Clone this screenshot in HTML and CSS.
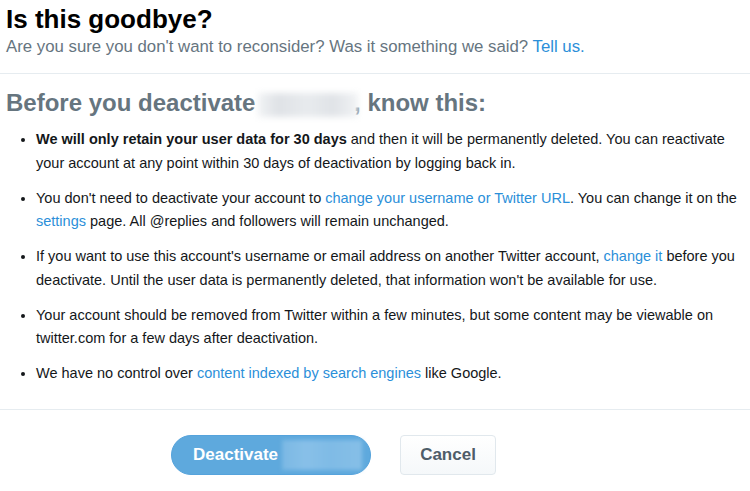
FILE: index.html
```html
<!DOCTYPE html>
<html>
<head>
<meta charset="utf-8">
<link rel="stylesheet" href="styles.css">
</head>
<body>
<div class="page">
  <header class="top">
    <h1 class="title">Is this goodbye?</h1>
    <p class="sub">Are you sure you don't want to reconsider? Was it something we said? <a class="link" href="#">Tell us.</a></p>
  </header>
  <section class="body">
    <h2 class="heading">Before you deactivate <span class="blur blur-head"></span>, know this:</h2>
    <ul class="list">
      <li><b>We will only retain your user data for 30 days</b> and then it will be permanently deleted. You can reactivate your account at any point within 30 days of deactivation by logging back in.</li>
      <li>You don't need to deactivate your account to <a class="link" href="#">change your username or Twitter URL</a>. You can change it on the <a class="link" href="#">settings</a> page. All @replies and followers will remain unchanged.</li>
      <li>If you want to use this account's username or email address on another Twitter account, <a class="link" href="#">change it</a> before you deactivate. Until the user data is permanently deleted, that information won't be available for use.</li>
      <li>Your account should be removed from Twitter within a few minutes, but some content may be viewable on twitter.com for a few days after deactivation.</li>
      <li>We have no control over <a class="link" href="#">content indexed by search engines</a> like Google.</li>
    </ul>
  </section>
  <footer class="actions">
    <button class="btn btn-primary">Deactivate <span class="blur blur-btn"></span></button>
    <button class="btn btn-cancel">Cancel</button>
  </footer>
</div>
</body>
</html>
```
FILE: styles.css
```css
* { box-sizing: border-box; }
html, body { margin: 0; padding: 0; background: #fff; }
body {
  font-family: "Liberation Sans", Arial, sans-serif;
  color: #14171a;
  width: 750px;
  height: 491px;
  overflow: hidden;
}
.top {
  padding: 4px 6px 0 6px;
  height: 74px;
  border-bottom: 1px solid #e6ecf0;
}
.title {
  margin: 0;
  font-size: 26px;
  line-height: 30px;
  font-weight: bold;
  color: #000;
}
.sub {
  margin: 3px 0 0 0;
  font-size: 16.8px;
  line-height: 20px;
  color: #66757f;
}
.link { text-decoration: none; color: #2b8fd9; }
.body {
  padding: 14px 6px 0 6px;
  height: 336px;
  border-bottom: 1px solid #e6ecf0;
}
.heading {
  margin: 0;
  font-size: 24px;
  line-height: 30px;
  font-weight: bold;
  color: #66757f;
}
.blur {
  display: inline-block;
  vertical-align: middle;
  filter: blur(3px);
}
.blur-head {
  width: 100px;
  height: 24px;
  margin: 0 -4px 0 -4px;
  background: linear-gradient(90deg, #f1f3f5 0%, #dfe2e6 20%, #e8ebee 50%, #e0e3e7 75%, #f1f3f5 100%);
}
.list {
  margin: 10px 0 0 0;
  padding: 0 0 0 30px;
  font-size: 14.5px;
  line-height: 23.5px;
  color: #14171a;
}
.list li { margin-bottom: 11.5px; }
.list li::marker { font-size: 13px; }
.actions {
  display: flex;
  justify-content: flex-start;
  align-items: center;
  gap: 29px;
  padding-top: 25px;
  padding-left: 171px;
}
.btn {
  font-family: "Liberation Sans", Arial, sans-serif;
  font-weight: bold;
  font-size: 17px;
  height: 40px;
  cursor: pointer;
}
.btn-primary {
  width: 200px;
  border-radius: 20px;
  border: 1px solid #55a3dc;
  background: #5ea9dd;
  color: #fff;
  text-align: left;
  padding: 0 0 0 21px;
  display: flex;
  align-items: center;
}
.blur-btn {
  width: 80px;
  height: 30px;
  margin-left: 4px;
  background: linear-gradient(90deg, #7bb8e4 0%, #88c0e8 30%, #7fbbe6 60%, #86bfe7 100%);
  filter: blur(2px);
}
.btn-cancel {
  width: 96px;
  border-radius: 4px;
  border: 1px solid #e1e8ed;
  background: linear-gradient(#fff, #f5f8fa);
  color: #4f5d69;
}
```
